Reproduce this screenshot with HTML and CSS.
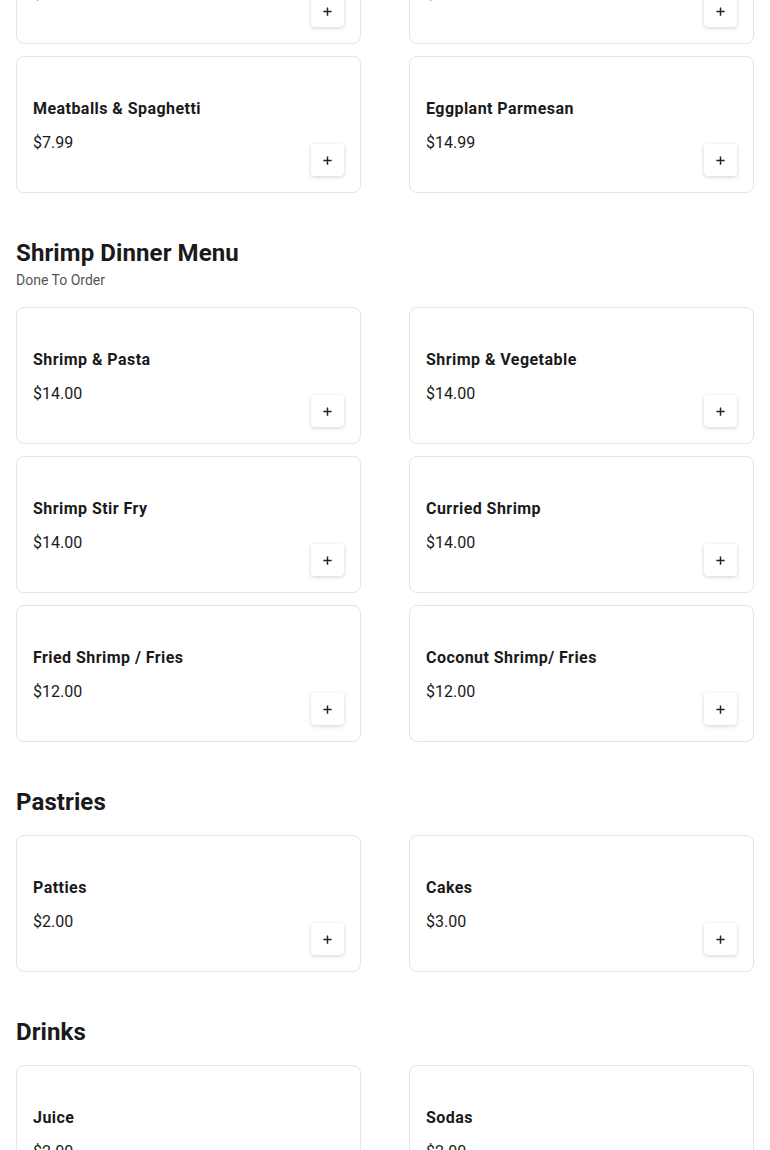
FILE: index.html
```html
<!DOCTYPE html>
<html>
<head>
	<title>Menu</title>
	<link rel="stylesheet" href="styles.css">
</head>
<body>
	<div class="menu">
		<section class="section section-first">
			<div class="grid">
				<div class="card">
					<div class="info">
						<div class="name">Baked Ziti</div>
						<div class="price">$9.99</div>
					</div>
					<button class="add"><svg viewBox="0 0 12 12"><path d="M6 1.5v9M1.5 6h9"/></svg></button>
				</div>
				<div class="card">
					<div class="info">
						<div class="name">Chicken Parmesan</div>
						<div class="price">$14.99</div>
					</div>
					<button class="add"><svg viewBox="0 0 12 12"><path d="M6 1.5v9M1.5 6h9"/></svg></button>
				</div>
				<div class="card">
					<div class="info">
						<div class="name">Meatballs &amp; Spaghetti</div>
						<div class="price">$7.99</div>
					</div>
					<button class="add"><svg viewBox="0 0 12 12"><path d="M6 1.5v9M1.5 6h9"/></svg></button>
				</div>
				<div class="card">
					<div class="info">
						<div class="name">Eggplant Parmesan</div>
						<div class="price">$14.99</div>
					</div>
					<button class="add"><svg viewBox="0 0 12 12"><path d="M6 1.5v9M1.5 6h9"/></svg></button>
				</div>
			</div>
		</section>

		<section class="section">
			<div class="section-head">
				<h2>Shrimp Dinner Menu</h2>
				<p>Done To Order</p>
			</div>
			<div class="grid">
				<div class="card">
					<div class="info">
						<div class="name">Shrimp &amp; Pasta</div>
						<div class="price">$14.00</div>
					</div>
					<button class="add"><svg viewBox="0 0 12 12"><path d="M6 1.5v9M1.5 6h9"/></svg></button>
				</div>
				<div class="card">
					<div class="info">
						<div class="name">Shrimp &amp; Vegetable</div>
						<div class="price">$14.00</div>
					</div>
					<button class="add"><svg viewBox="0 0 12 12"><path d="M6 1.5v9M1.5 6h9"/></svg></button>
				</div>
				<div class="card">
					<div class="info">
						<div class="name">Shrimp Stir Fry</div>
						<div class="price">$14.00</div>
					</div>
					<button class="add"><svg viewBox="0 0 12 12"><path d="M6 1.5v9M1.5 6h9"/></svg></button>
				</div>
				<div class="card">
					<div class="info">
						<div class="name">Curried Shrimp</div>
						<div class="price">$14.00</div>
					</div>
					<button class="add"><svg viewBox="0 0 12 12"><path d="M6 1.5v9M1.5 6h9"/></svg></button>
				</div>
				<div class="card">
					<div class="info">
						<div class="name">Fried Shrimp / Fries</div>
						<div class="price">$12.00</div>
					</div>
					<button class="add"><svg viewBox="0 0 12 12"><path d="M6 1.5v9M1.5 6h9"/></svg></button>
				</div>
				<div class="card">
					<div class="info">
						<div class="name">Coconut Shrimp/ Fries</div>
						<div class="price">$12.00</div>
					</div>
					<button class="add"><svg viewBox="0 0 12 12"><path d="M6 1.5v9M1.5 6h9"/></svg></button>
				</div>
			</div>
		</section>

		<section class="section">
			<div class="section-head">
				<h2>Pastries</h2>
			</div>
			<div class="grid">
				<div class="card">
					<div class="info">
						<div class="name">Patties</div>
						<div class="price">$2.00</div>
					</div>
					<button class="add"><svg viewBox="0 0 12 12"><path d="M6 1.5v9M1.5 6h9"/></svg></button>
				</div>
				<div class="card">
					<div class="info">
						<div class="name">Cakes</div>
						<div class="price">$3.00</div>
					</div>
					<button class="add"><svg viewBox="0 0 12 12"><path d="M6 1.5v9M1.5 6h9"/></svg></button>
				</div>
			</div>
		</section>

		<section class="section">
			<div class="section-head">
				<h2>Drinks</h2>
			</div>
			<div class="grid">
				<div class="card">
					<div class="info">
						<div class="name">Juice</div>
						<div class="price">$2.00</div>
					</div>
					<button class="add"><svg viewBox="0 0 12 12"><path d="M6 1.5v9M1.5 6h9"/></svg></button>
				</div>
				<div class="card">
					<div class="info">
						<div class="name">Sodas</div>
						<div class="price">$2.00</div>
					</div>
					<button class="add"><svg viewBox="0 0 12 12"><path d="M6 1.5v9M1.5 6h9"/></svg></button>
				</div>
			</div>
		</section>
	</div>
</body>
</html>
```

FILE: styles.css
```css
* {
	margin: 0;
	padding: 0;
	box-sizing: border-box;
}

body {
	background: #fff;
	color: #1a1a1a;
	font-family: Roboto, "Noto Sans", sans-serif;
}

.menu {
	padding: 0 16px;
}

.section {
	margin-top: 44px;
}

/* page is scrolled: first row of cards is half out of view */
.section-first {
	margin-top: -93px;
}

.section-head {
	margin-bottom: 17px;
}

.section-head h2 {
	font-size: 24px;
	line-height: 32px;
	font-weight: 700;
	letter-spacing: 0.1px;
	color: #1a1a1a;
}

.section-head p {
	font-size: 14px;
	line-height: 22px;
	color: #555;
	margin-bottom: -1px;
}

.grid {
	display: grid;
	grid-template-columns: 1fr 1fr;
	column-gap: 48px;
	row-gap: 12px;
}

.card {
	height: 137px;
	border: 1px solid #e4e4e4;
	border-radius: 8px;
	padding: 40px 16px 16px 16px;
	display: flex;
	justify-content: space-between;
}

.name {
	font-size: 16px;
	line-height: 24px;
	font-weight: 700;
	letter-spacing: 0.45px;
}

.price {
	font-size: 16px;
	line-height: 24px;
	margin-top: 10px;
}

.add {
	align-self: flex-end;
	width: 33px;
	height: 32px;
	border: none;
	border-radius: 4px;
	background: #fff;
	box-shadow: 0 1px 4px rgba(0, 0, 0, 0.18);
	display: flex;
	align-items: center;
	justify-content: center;
	cursor: pointer;
}

.add svg {
	width: 11px;
	height: 11px;
	stroke: #222;
	stroke-width: 1.6;
	fill: none;
}
```
